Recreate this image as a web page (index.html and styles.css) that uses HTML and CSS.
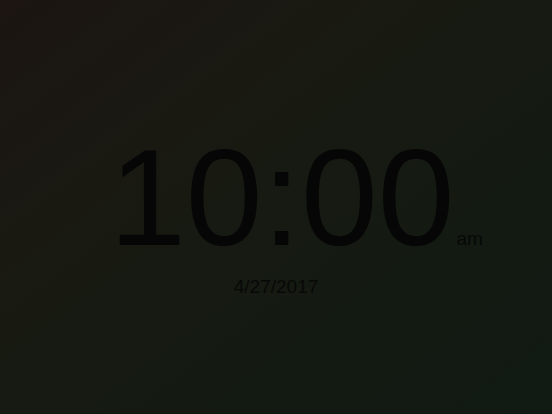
FILE: index.html
```html
<!DOCTYPE html>
<html lang="en">
<head>
<meta charset="utf-8">
<title>Clock</title>
<link rel="stylesheet" href="styles.css">
</head>
<body>
<main class="screen">
  <div class="clock">
    <div class="time-row">
      <span class="time">10:00</span><span class="meridiem">am</span>
    </div>
    <div class="date">4/27/2017</div>
  </div>
</main>
</body>
</html>
```

FILE: styles.css
```css
html, body {
  margin: 0;
  padding: 0;
  height: 100%;
}

body {
  font-family: "Liberation Sans", Arial, Helvetica, sans-serif;
  background: linear-gradient(to bottom right, #1c1512 0%, #181a12 40%, #131a12 70%, #111a13 100%);
  overflow: hidden;
}

.screen {
  height: 414px;
  box-sizing: border-box;
  padding-top: 128px;
  display: flex;
  justify-content: center;
}

.clock {
  display: flex;
  flex-direction: column;
  align-items: center;
}

.time-row {
  display: flex;
  align-items: baseline;
  padding-left: 12px;
}

.time {
  font-size: 138px;
  line-height: 1;
  color: #050605;
}

.meridiem {
  font-size: 19px;
  line-height: 1;
  color: #070907;
  margin-left: 2px;
  margin-right: -28px;
}

.date {
  margin-top: 11px;
  font-size: 19px;
  line-height: 1;
  color: #070907;
}
```
